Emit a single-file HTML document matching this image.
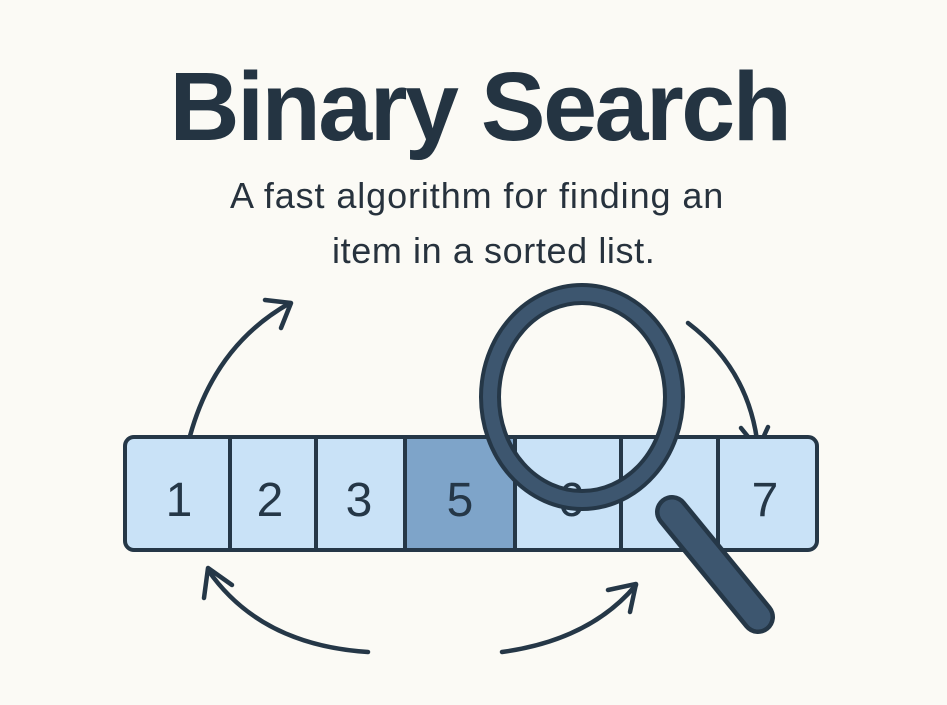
<!DOCTYPE html>
<html><head><meta charset="utf-8"><style>
html,body{margin:0;padding:0;}
body{width:947px;height:705px;background:#fbfaf5;position:relative;overflow:hidden;font-family:"Liberation Sans",sans-serif;}
.t{position:absolute;left:0;width:947px;text-align:center;color:#243442;}
</style></head><body>
<div class="t" style="top:52px;font-size:97px;font-weight:bold;letter-spacing:-2.5px;line-height:110px;left:6px;">Binary Search</div>
<div style="position:absolute;left:230px;top:176px;font-size:36px;color:#27323d;line-height:40px;white-space:nowrap;letter-spacing:0.9px;">A fast algorithm for finding an</div>
<div style="position:absolute;left:332px;top:231px;font-size:36px;color:#27323d;line-height:40px;white-space:nowrap;letter-spacing:0.6px;">item in a sorted list.</div>
<svg width="947" height="705" style="position:absolute;left:0;top:0" viewBox="0 0 947 705">
<g fill="none" stroke="#253747" stroke-width="4.5" stroke-linecap="round" stroke-linejoin="round">
<path d="M190 436 Q215 345 290 303"/><path d="M265 300 L291 303 L281 328"/>
<path d="M688 323 Q750 370 758 448"/><path d="M741 428 L758 449 L768 427"/>
<path d="M368 652 Q260 645 208 570"/><path d="M204 598 L208 568 L232 585"/>
<path d="M502 652 Q590 640 636 585"/><path d="M608 590 L636 584 L630 612"/>
</g>
<rect x="125" y="437" width="692" height="113" rx="9" fill="#c9e2f7" stroke="#253747" stroke-width="4"/>
<rect x="406" y="439" width="108" height="109" fill="#7ea4c9"/>
<g stroke="#253747" stroke-width="4"><line x1="230" y1="437" x2="230" y2="550"/><line x1="316" y1="437" x2="316" y2="550"/><line x1="405" y1="437" x2="405" y2="550"/><line x1="515" y1="437" x2="515" y2="550"/><line x1="621" y1="437" x2="621" y2="550"/><line x1="718" y1="437" x2="718" y2="550"/></g>
<g font-family="Liberation Sans" font-size="48" fill="#253747" text-anchor="middle"><text x="179" y="516">1</text><text x="270" y="516">2</text><text x="359" y="516">3</text><text x="460" y="516">5</text><text x="571" y="516">6</text><text x="765" y="516">7</text></g>
<line x1="672" y1="512" x2="758" y2="617" stroke="#253747" stroke-width="34" stroke-linecap="round"/>
<line x1="672" y1="512" x2="758" y2="617" stroke="#3d566f" stroke-width="25" stroke-linecap="round"/>
<ellipse cx="582" cy="397" rx="92" ry="103" fill="#c9e2f7" fill-opacity="0" stroke="#253747" stroke-width="22"/>
<ellipse cx="582" cy="397" rx="92" ry="103" fill="none" stroke="#3d566f" stroke-width="14"/>
</svg>
</body></html>
